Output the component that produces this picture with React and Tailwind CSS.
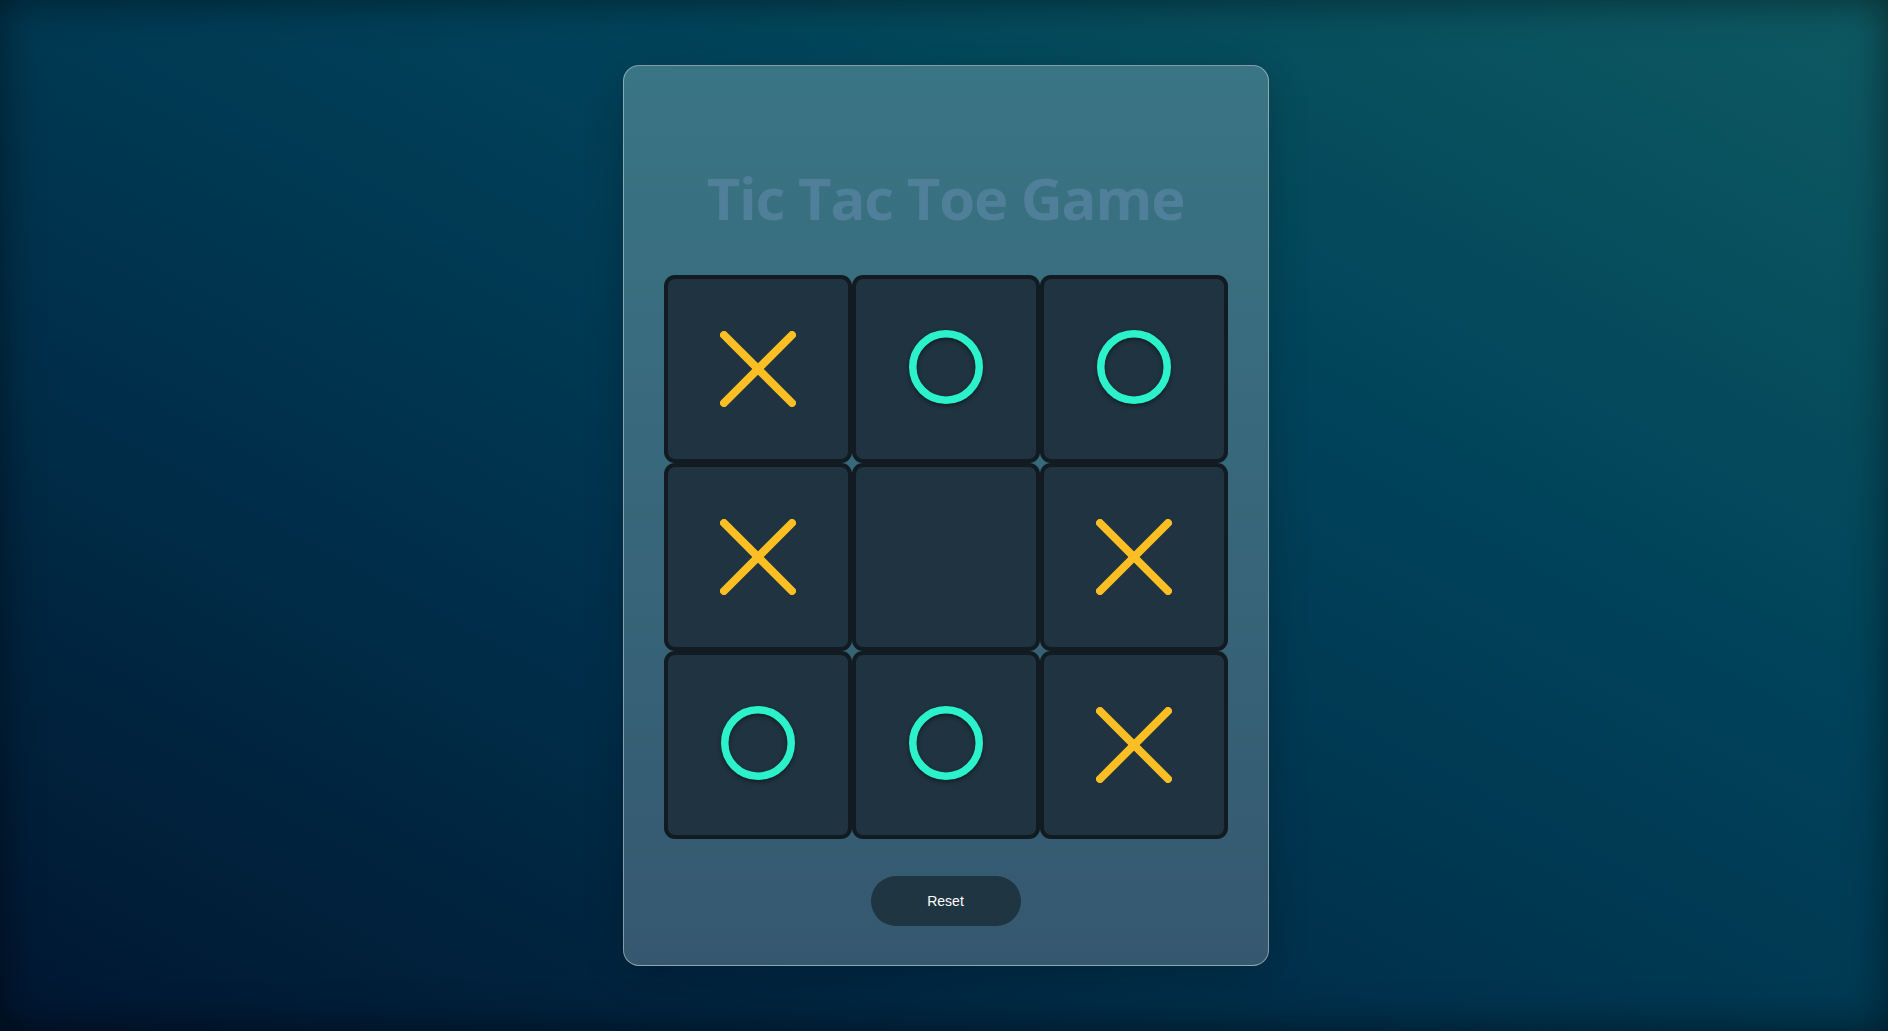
import React from "react";

const board = ["X", "O", "O", "X", "", "X", "O", "O", "X"];

function XMark() {
  return (
    <svg width="76" height="76" viewBox="0 0 76 76" fill="none">
      <line x1="4" y1="4" x2="72" y2="72" stroke="#fbbf24" strokeWidth="8" strokeLinecap="round" />
      <line x1="72" y1="4" x2="4" y2="72" stroke="#fbbf24" strokeWidth="8" strokeLinecap="round" />
    </svg>
  );
}

function OMark() {
  return (
    <svg width="74" height="74" viewBox="0 0 74 74" fill="none" className="drop-shadow-[0_2px_2px_rgba(0,0,0,0.45)] -translate-y-[2px]">
      <circle cx="37" cy="37" r="33.25" stroke="#2cf2cb" strokeWidth="7.5" />
    </svg>
  );
}

export default function App() {
  return (
    <div className="relative w-full h-[1031px] overflow-hidden bg-[linear-gradient(to_top_right,#011630_0%,#002f4b_35%,#00435a_65%,#0f5a62_100%)] flex justify-center">
      <div className="pointer-events-none absolute inset-0 shadow-[inset_0_0_40px_rgba(0,0,0,0.5)]" />
      <div className="relative ml-[3px] mt-[65px] w-[646px] h-[901px] rounded-2xl border border-white/40 bg-[linear-gradient(to_bottom,#3a7584,#35586f)] shadow-[0_10px_40px_rgba(0,0,0,0.2)] flex flex-col items-center pt-[102px]">
        <h1 className="h-[60px] leading-[60px] text-[58px] font-bold text-[#4f7f99] font-['Open_Sans',sans-serif] tracking-[-1.2px]">
          Tic Tac Toe Game
        </h1>
        <div className="mt-[48px] grid grid-cols-[repeat(3,186px)] grid-rows-[repeat(3,186px)] gap-[2px]">
          {board.map((v, i) => (
            <div
              key={i}
              className="rounded-[10px] border-[3px] border-[#111b21] bg-[#1f3440] shadow-[0_0_0_1px_#111b21] flex items-center justify-center"
            >
              {v === "X" ? <XMark /> : v === "O" ? <OMark /> : null}
            </div>
          ))}
        </div>
        <button className="mt-[38px] w-[150px] h-[50px] rounded-full bg-[#1f3541] text-white text-[14px] font-['Liberation_Sans',Arial,sans-serif]">
          Reset
        </button>
      </div>
    </div>
  );
}
